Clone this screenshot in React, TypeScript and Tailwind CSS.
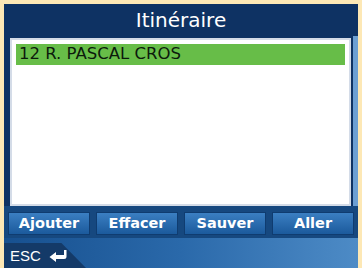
import React from "react";

const BUTTONS = ["Ajouter", "Effacer", "Sauver", "Aller"];

function ReturnArrow() {
  return (
    <svg width="20" height="14" viewBox="0 0 20 14" className="block">
      <path
        d="M16 1 L18.5 1 L18.5 7.5 Q18.5 10 16 10 L8 10 L8 13 L1.5 8 L8 3 L8 6 L16 6 Z"
        fill="white"
      />
    </svg>
  );
}

export default function App() {
  return (
    <div
      className="flex h-[268px] w-[362px] flex-col bg-[#fde8b5] px-1 pt-1"
      style={{ fontFamily: '"DejaVu Sans", "Noto Sans", sans-serif' }}
    >
      <div className="flex flex-1 flex-col bg-[#0e3263]">
        <div className="flex h-8 items-center justify-center text-[20px] leading-none text-white">
          Itinéraire
        </div>

        <div className="flex h-[170px]">
          <div className="ml-[6px] mt-[2px] flex-1 border-2 border-[#d4dce8] bg-white p-[4px]">
            <div className="flex h-[21px] items-center bg-[#67bd48] px-[3px] text-[16.5px] leading-none text-[#0c1a0c]">
              12 R. PASCAL CROS
            </div>
          </div>
          <div className="ml-[2px] w-[5px] bg-[#6c9fd3]" />
        </div>

        <div className="flex flex-1 flex-col bg-gradient-to-r from-[#17508f] via-[#2a69aa] to-[#4d8bc6]">
          <div className="flex gap-[6px] bg-[#16487f] px-[4px] pt-[6px] pb-[3px]">
            {BUTTONS.map((b) => (
              <div
                key={b}
                className="flex h-[23px] flex-1 items-center justify-center border border-[#0f3c70] bg-gradient-to-b from-[#3b7fc2] to-[#1b5a9c] text-[14.5px] font-bold leading-none text-white"
              >
                {b}
              </div>
            ))}
          </div>
          <div className="flex flex-1 items-end">
            <div
              className="flex h-[25px] w-[82px] items-center gap-[7px] bg-[#143a68] pl-[6px] text-[15px] leading-none text-white"
              style={{ clipPath: "polygon(0 0, 70% 0, 100% 100%, 0 100%)" }}
            >
              <span style={{ fontFamily: '"Liberation Sans", sans-serif' }}>ESC</span>
              <ReturnArrow />
            </div>
          </div>
        </div>
      </div>
    </div>
  );
}
